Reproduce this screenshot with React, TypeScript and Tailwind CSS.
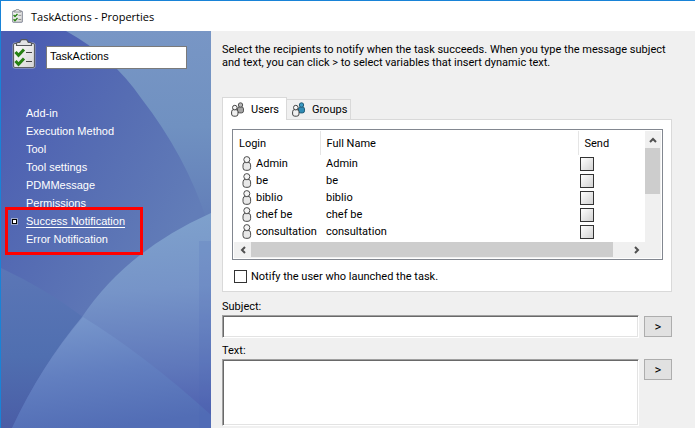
import type { ReactNode } from "react";

const navItems = [
  "Add-in",
  "Execution Method",
  "Tool",
  "Tool settings",
  "PDMMessage",
  "Permissions",
  "Success Notification",
  "Error Notification",
];
const activeItem = "Success Notification";
const users = ["Admin", "be", "biblio", "chef be", "consultation"];

function ClipboardIcon({ className }: { className: string }) {
  return (
    <svg viewBox="0 0 24 30" className={className} aria-hidden="true">
      <defs>
        <linearGradient id="paper" x1="0" y1="0" x2="1" y2="1">
          <stop offset="0" stopColor="#ffffff" />
          <stop offset="1" stopColor="#d4d4d4" />
        </linearGradient>
      </defs>
      <rect x="0.500" y="3.500" width="23" height="26" rx="2.500" fill="#a9b0cf" />
      <rect x="1.500" y="4.500" width="21" height="24" rx="1.500" fill="url(#paper)" stroke="#5c5f64" strokeWidth="1.200" />
      <path d="M4.500 6.500V4.500q0-1 1-1h2.200l1-2q.400-.8 1.300-.8h4q.9 0 1.300.8l1 2h2.200q1 0 1 1v2z" fill="#e2e3e5" stroke="#55585c" strokeWidth="1.200" />
      <path d="M3.500 13l3 3.200 5.500-5.700M3.500 22l3 3.200 5.500-5.700" fill="none" stroke="#268012" strokeWidth="3" />
      <path d="M14 13.500h6M14 22.500h6" stroke="#444" strokeWidth="1.200" />
    </svg>
  );
}

function PersonIcon() {
  return (
    <svg viewBox="0 0 10 15" className="h-[15px] w-[10px] shrink-0" aria-hidden="true">
      <rect x="1" y="6.300" width="7.600" height="8" rx="2.600" fill="#e8e8e8" stroke="#4c4c4c" />
      <circle cx="4.800" cy="3.600" r="3" fill="#f4f4f4" stroke="#4c4c4c" />
      <path d="M3.200 6.600h3.200" stroke="#666" />
    </svg>
  );
}

function PairIcon({ blue }: { blue?: boolean }) {
  return (
    <svg viewBox="0 0 13 15" className="h-[15px] w-[13px] shrink-0" aria-hidden="true">
      <rect x="6.500" y="4.900" width="6" height="6" rx="2" fill={blue ? "#2f8cb5" : "#a5a5a5"} stroke={blue ? "#225c78" : "#555"} />
      <circle cx="9.500" cy="3" r="2.200" fill={blue ? "#3b9ac4" : "#b5b5b5"} stroke={blue ? "#225c78" : "#555"} />
      <rect x="0.600" y="7.600" width="6.400" height="6.600" rx="2.200" fill="#f0f0f0" stroke="#444" />
      <circle cx="3.800" cy="5.600" r="2.300" fill="#f6f6f6" stroke="#444" />
    </svg>
  );
}

function SidebarArt() {
  return (
    <svg viewBox="0 0 210 397" preserveAspectRatio="none" className="absolute inset-0 h-full w-full" aria-hidden="true">
      <defs>
        <linearGradient id="base" gradientUnits="userSpaceOnUse" x1="0" y1="60" x2="200" y2="170">
          <stop offset="0" stopColor="#4b5db2" />
          <stop offset="0.500" stopColor="#566db3" />
          <stop offset="1" stopColor="#627db8" />
        </linearGradient>
        <linearGradient id="sky" x1="0" y1="0" x2="0" y2="1">
          <stop offset="0" stopColor="#7896c5" />
          <stop offset="0.500" stopColor="#7091c1" />
          <stop offset="1" stopColor="#627eb8" />
        </linearGradient>
        <linearGradient id="low" x1="0" y1="0" x2="0" y2="1">
          <stop offset="0" stopColor="#5b76b6" />
          <stop offset="0.550" stopColor="#506fb0" />
          <stop offset="1" stopColor="#4a5da6" />
        </linearGradient>
        <linearGradient id="disc" gradientUnits="userSpaceOnUse" x1="150" y1="190" x2="165" y2="385">
          <stop offset="0" stopColor="#7ea0cc" />
          <stop offset="0.350" stopColor="#7694c8" />
          <stop offset="0.750" stopColor="#5f78bb" />
          <stop offset="1" stopColor="#4f62b0" />
        </linearGradient>
        <linearGradient id="front" gradientUnits="userSpaceOnUse" x1="90" y1="285" x2="105" y2="397">
          <stop offset="0" stopColor="#7796cb" />
          <stop offset="0.500" stopColor="#627fc0" />
          <stop offset="1" stopColor="#526db5" />
        </linearGradient>
      </defs>
      <rect width="210" height="397" fill="url(#base)" />
      <path d="M65 0Q112 26 140 67Q185 125 206 190H210V0z" fill="url(#sky)" />
      <path d="M0 237Q45 258 82 286L100 397H0z" fill="url(#low)" />
      <path d="M210 182Q125 220 81 286Q40 335 11 397H210z" fill="url(#disc)" />
      <path d="M82 286Q145 325 210 384V397H11Q40 335 82 286z" fill="url(#front)" />
      <path d="M198 210H210V397H198z" fill="#4b68b4" opacity="0.150" />
    </svg>
  );
}

function Chevron({ d }: { d: string }) {
  return (
    <svg viewBox="0 0 8 8" className="h-2 w-2" aria-hidden="true">
      <path d={d} fill="none" stroke="#505050" strokeWidth="2" />
    </svg>
  );
}

function InsertButton({ label }: { label: string }) {
  return (
    <button type="button" aria-label={label} className="h-[21px] w-7 shrink-0 border border-[#adadad] bg-[#e1e1e1] text-center text-[13px] leading-4">
      &gt;
    </button>
  );
}

function Tab({ selected, icon, children }: { selected?: boolean; icon: ReactNode; children: string }) {
  return (
    <button
      type="button"
      role="tab"
      aria-selected={!!selected}
      className={
        selected
          ? "relative z-10 -mb-px flex h-[23px] w-[65px] items-center gap-[7px] border border-b-0 border-[#d9d9d9] bg-white pl-2"
          : "flex h-5 w-16 items-center gap-[7px] border border-b-0 border-l-0 border-[#d9d9d9] bg-[#f0f0f0] pl-[5px]"
      }
    >
      {icon}
      <span>{children}</span>
    </button>
  );
}

const sunken =
  "block min-w-0 flex-1 resize-none border border-t-[#a0a0a0] border-l-[#a0a0a0] border-r-white border-b-white bg-white px-1 shadow-[inset_1px_1px_0_#696969,inset_-1px_-1px_0_#e3e3e3] outline-none";

export default function App() {
  return (
    <div className="flex min-h-screen flex-col border-t border-l border-[#1883d7] bg-[#f0f0f0] font-['Roboto',sans-serif] text-[11px] leading-[13px] text-black">
      <header className="flex h-[30px] items-center gap-2 bg-white pl-[11px]">
        <ClipboardIcon className="h-[14px] w-[11px]" />
        <h1 className="font-['Open_Sans',sans-serif]">TaskActions - Properties</h1>
      </header>

      <div className="flex flex-1">
        <aside className="relative w-[210px] shrink-0 overflow-hidden font-['Liberation_Sans',sans-serif] text-white">
          <SidebarArt />
          <div className="relative">
            <div className="flex items-end gap-[10px] pt-2 pl-[11px]">
              <ClipboardIcon className="h-[30px] w-6" />
              <input
                aria-label="Task name"
                defaultValue="TaskActions"
                className="h-[23px] w-[141px] border border-[#7a7a7a] bg-white px-[3px] pb-1 text-black outline-none"
              />
            </div>
            <nav className="relative mt-[35px]">
              <ul>
                {navItems.map((item) => (
                  <li key={item} className="flex h-[18px] items-center pl-[11px]">
                    <span className="flex w-[14px]">
                      {item === activeItem && <span className="h-[5px] w-[5px] border border-black bg-white outline outline-[#9aa6c8]" />}
                    </span>
                    <a href="#" className={item === activeItem ? "underline underline-offset-2" : ""}>
                      {item}
                    </a>
                  </li>
                ))}
              </ul>
              <div className="pointer-events-none absolute -bottom-[7px] left-1 h-12 w-[138px] border-3 border-[#ff0000]" />
            </nav>
          </div>
        </aside>

        <main className="min-w-0 flex-1 pt-3 pr-[23px] pb-[2px] pl-[11px]">
          <p className="max-w-[450px]">
            Select the recipients to notify when the task succeeds. When you type the message subject and text, you can click &gt; to select variables that insert dynamic text.
          </p>

          <div role="tablist" className="mt-7 flex items-end">
            <Tab selected icon={<PairIcon />}>Users</Tab>
            <Tab icon={<PairIcon blue />}>Groups</Tab>
          </div>
          <section className="border border-[#d9d9d9] bg-white pt-[9px] pr-2 pb-2 pl-[9px]">
            <div className="border border-[#828790] p-px">
              <div className="flex">
                <div className="flex-1 pb-[2px]">
                  <table className="w-full table-fixed border-collapse text-left">
                    <colgroup>
                      <col className="w-[86px]" />
                      <col />
                      <col className="w-[67px]" />
                    </colgroup>
                    <thead>
                      <tr className="h-6">
                        <th className="border-r border-[#e5e5e5] pl-[5px] font-normal">Login</th>
                        <th className="border-r border-[#e5e5e5] pl-[6px] font-normal">Full Name</th>
                        <th className="pl-[6px] font-normal">Send</th>
                      </tr>
                    </thead>
                    <tbody>
                      {users.map((user) => (
                        <tr key={user} className="h-[17px]">
                          <td className="p-0 pl-2">
                            <span className="flex items-center gap-1">
                              <PersonIcon />
                              {user}
                            </span>
                          </td>
                          <td className="p-0 pl-[6px]">{user}</td>
                          <td className="p-0 pl-[2px]">
                            <input
                              type="checkbox"
                              aria-label={`Send to ${user}`}
                              className="block h-[14px] w-[14px] appearance-none border border-[#333] bg-linear-to-br from-white to-[#d2d2d2]"
                            />
                          </td>
                        </tr>
                      ))}
                    </tbody>
                  </table>
                </div>
                <div className="flex w-4 shrink-0 flex-col items-center bg-[#f0f0f0]">
                  <span className="flex h-[17px] items-center">
                    <Chevron d="M1 6l3-3 3 3" />
                  </span>
                  <span className="h-[46px] w-full border-r border-[#f0f0f0] bg-[#cdcdcd]" />
                </div>
              </div>
              <div className="flex h-4 items-start bg-[#f0f0f0] pr-4">
                <span className="flex h-4 w-[17px] items-center justify-center">
                  <Chevron d="M6 1L3 4l3 3" />
                </span>
                <span className="flex flex-1">
                  <span className="h-[15px] w-[96%] bg-[#cdcdcd]" />
                </span>
                <span className="flex h-4 w-[17px] items-center justify-center">
                  <Chevron d="M2 1l3 3-3 3" />
                </span>
              </div>
            </div>
            <label className="mt-[10px] flex items-center gap-1 pl-[2px]">
              <input type="checkbox" className="h-[13px] w-[13px] appearance-none border border-[#333] bg-white" />
              Notify the user who launched the task.
            </label>
          </section>

          <label htmlFor="subject" className="mt-2 block">
            Subject:
          </label>
          <div className="mt-[2px] flex items-center gap-[5px]">
            <input id="subject" className={`h-[23px] ${sunken}`} />
            <InsertButton label="Insert variable in subject" />
          </div>
          <label htmlFor="text" className="mt-[6px] block">
            Text:
          </label>
          <div className="mt-[2px] flex items-start gap-[5px]">
            <textarea id="text" className={`h-[67px] ${sunken}`} />
            <InsertButton label="Insert variable in text" />
          </div>
        </main>
      </div>
    </div>
  );
}
